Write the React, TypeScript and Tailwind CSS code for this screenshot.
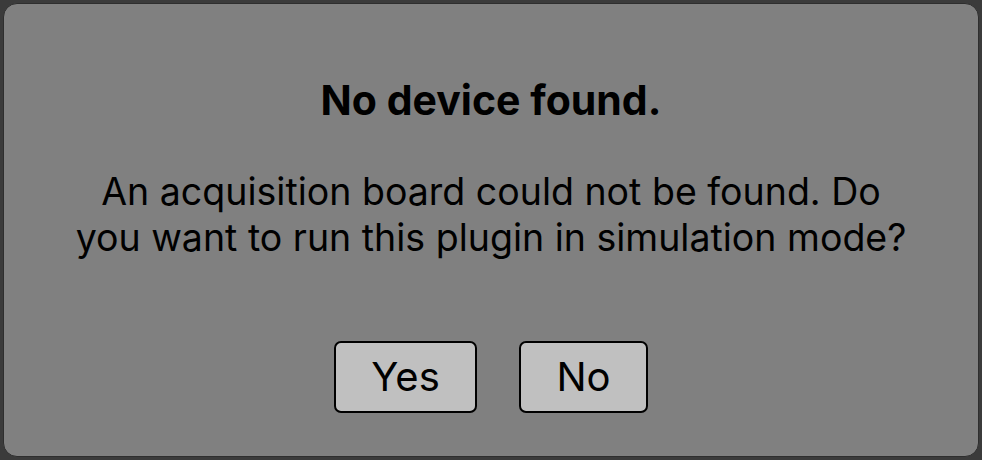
export default function App() {
  return (
    <div className="w-[982px] h-[460px] bg-[#3b3b3b] p-[3px] font-['Inter','Noto_Sans',sans-serif]">
      <div className="h-full w-full rounded-[14px] bg-[#808080] border border-[#2e2e2e] flex flex-col items-center text-black">
        <h1 className="mt-[72px] text-[41px] font-bold leading-[48px] whitespace-nowrap">No device found.</h1>
        <p className="mt-[45px] text-[37.5px] leading-[46px] text-center whitespace-nowrap">
          An acquisition board could not be found. Do
          <br />
          you want to run this plugin in simulation mode?
        </p>
        <div className="mt-[80px] flex gap-[42px]">
          <button className="w-[143px] h-[72px] rounded-[7px] border-2 border-black bg-[#c0c0c0] text-[40px] leading-none">
            Yes
          </button>
          <button className="w-[129px] h-[72px] rounded-[7px] border-2 border-black bg-[#c0c0c0] text-[40px] leading-none">
            No
          </button>
        </div>
      </div>
    </div>
  );
}
